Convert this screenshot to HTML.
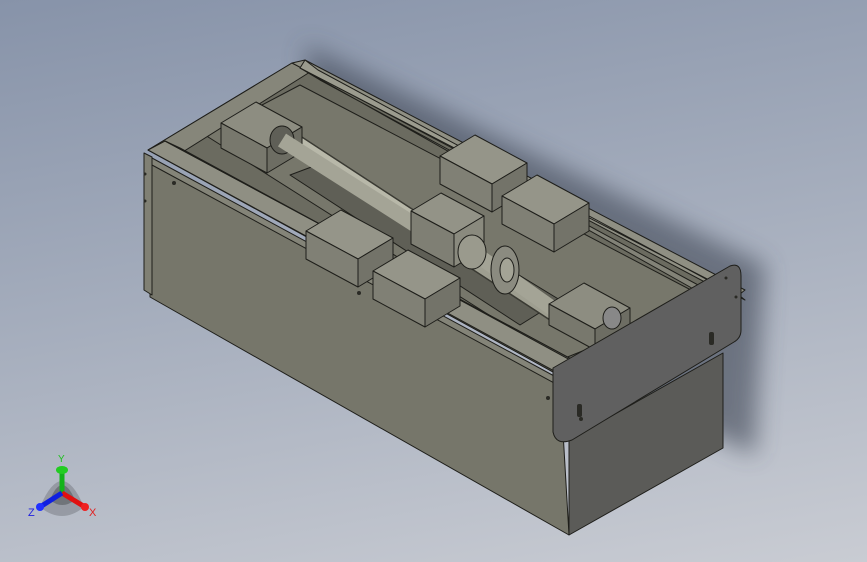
<!DOCTYPE html>
<html><head><meta charset="utf-8"><style>
html,body{margin:0;padding:0;width:867px;height:562px;overflow:hidden}
body{background:linear-gradient(170deg,#8793a9 0%,#a7afbe 50%,#c9ccd3 100%);font-family:"Liberation Sans",sans-serif}
svg{position:absolute;left:0;top:0}
</style></head><body>
<svg width="867" height="562" viewBox="0 0 867 562">
<defs>
<filter id="b" x="-20%" y="-20%" width="140%" height="140%"><feGaussianBlur stdDeviation="12"/></filter>
</defs>
<!-- shadow -->
<polygon points="305,45 765,265 755,455 600,380 320,150" fill="#3e4452" opacity="0.6" filter="url(#b)"/>
<g stroke="#1e1e1a" stroke-width="1" stroke-linejoin="round">
<polygon points="569,440 723,353 723,448 569,535" fill="#5b5b58"/>
<polygon points="150,158 560,380 569,535 150,297" fill="#76766a"/>
<polygon points="144,153 152,157 152,295 144,290" fill="#808074"/>
<polygon points="148,150 292,63 740,296 553,372" fill="#6b6b60"/>
<polygon points="205,135 300,85 710,300 560,360" fill="#77776b"/>
<polygon points="290,175 330,160 560,300 520,325" fill="#5f5f56"/>
<polygon points="148,150 292,63 310,72 170,160" fill="#86867a"/>
<polygon points="292,63 305,60 745,290 735,298" fill="#8f8f83"/>
<polygon points="305,60 318,70 745,300 740,296 300,68" fill="#9b9b8e"/>
<polygon points="300,68 320,80 735,305 722,305" fill="#828277"/>
<polygon points="148,150 165,141 573,360 556,372" fill="#8f8f83"/>
<polygon points="165,141 180,148 585,368 573,360" fill="#9d9d90"/>
<polygon points="152,158 556,377 556,384 152,165" fill="#848478"/>
<line x1="272" y1="128" x2="566" y2="320" stroke="#3a3a33" stroke-width="19" stroke-linecap="round"/>
<line x1="272" y1="128" x2="566" y2="320" stroke="#9e9e90" stroke-width="16" stroke-linecap="round"/>
<line x1="276" y1="124" x2="566" y2="314" stroke="#b8b8a9" stroke-width="5" stroke-linecap="round"/>
<polygon points="221,123 256,102 302,127 267,148" fill="#8d8d81"/>
<polygon points="221,123 267,148 267,173 221,148" fill="#78786d"/>
<polygon points="267,148 302,127 302,152 267,173" fill="#6d6d63"/>
<ellipse cx="282" cy="140" rx="12" ry="14" fill="#5f5f57"/>
<line x1="282" y1="140" x2="420" y2="228" stroke="#a4a496" stroke-width="15"/>
<polygon points="440,156 475,135 527,163 492,184" fill="#959589"/>
<polygon points="440,156 492,184 492,212 440,184" fill="#808075"/>
<polygon points="492,184 527,163 527,191 492,212" fill="#737369"/>
<polygon points="502,196 537,175 589,203 554,224" fill="#959589"/>
<polygon points="502,196 554,224 554,252 502,224" fill="#808075"/>
<polygon points="554,224 589,203 589,231 554,252" fill="#737369"/>
<polygon points="306,231 341,210 393,238 358,259" fill="#959589"/>
<polygon points="306,231 358,259 358,287 306,259" fill="#808075"/>
<polygon points="358,259 393,238 393,266 358,287" fill="#737369"/>
<polygon points="411,211 441,193 484,216 454,234" fill="#939387"/>
<polygon points="411,211 454,234 454,267 411,244" fill="#7f7f74"/>
<polygon points="454,234 484,216 484,249 454,267" fill="#8a8a7e"/>
<line x1="470" y1="250" x2="566" y2="318" stroke="#a4a496" stroke-width="15"/>
<ellipse cx="472" cy="252" rx="14" ry="17" fill="#9a9a8d"/>
<ellipse cx="505" cy="270" rx="14" ry="24" fill="#8b8b80"/>
<ellipse cx="507" cy="270" rx="7" ry="12" fill="#a4a496"/>
<polygon points="373,271 408,250 460,278 425,299" fill="#959589"/>
<polygon points="373,271 425,299 425,327 373,299" fill="#808075"/>
<polygon points="425,299 460,278 460,306 425,327" fill="#737369"/>
<polygon points="549,304 584,283 630,308 595,329" fill="#8d8d81"/>
<polygon points="549,304 595,329 595,350 549,325" fill="#78786d"/>
<polygon points="595,329 630,308 630,329 595,350" fill="#6d6d63"/>
<ellipse cx="612" cy="318" rx="9" ry="11" fill="#888" />
<path d="M553,368 L730,266 Q741,262 741,276 L741,330 Q741,338 734,342 L572,440 Q556,446 553,432 Z" fill="#606060"/>
</g>
<g fill="#2a2a25">
<circle cx="174" cy="183" r="2"/><circle cx="359" cy="293" r="2"/><circle cx="548" cy="398" r="2"/>
<circle cx="736" cy="297" r="1.5"/><circle cx="726" cy="278" r="1.5"/><circle cx="581" cy="419" r="2"/>
<rect x="577" y="404" width="5" height="13" rx="2"/><rect x="709" y="332" width="5" height="13" rx="2"/>
<circle cx="145" cy="174" r="1.5"/><circle cx="145" cy="201" r="1.5"/>
</g>
<g>
<path d="M40,507 Q62,455 84,507 Q62,525 40,507Z" fill="#6f7278" opacity="0.45"/>
<path d="M50,500 Q62,470 75,500 Q62,510 50,500Z" fill="#4a4d52" opacity="0.5"/>
<line x1="62" y1="493" x2="62" y2="470" stroke="#13b31a" stroke-width="5"/>
<ellipse cx="62" cy="470" rx="6" ry="4" fill="#22cc22"/>
<line x1="62" y1="493" x2="85" y2="507" stroke="#e01010" stroke-width="5"/>
<circle cx="85" cy="507" r="4" fill="#ee2020"/>
<line x1="62" y1="493" x2="40" y2="507" stroke="#1020e0" stroke-width="5"/>
<circle cx="40" cy="507" r="4" fill="#2030ff"/>
<text x="58" y="462" font-size="10" fill="#20c020">Y</text>
<text x="89" y="516" font-size="11" fill="#e02020">X</text>
<text x="28" y="516" font-size="11" fill="#2020e0">Z</text>
</g>
</svg>
</body></html>
